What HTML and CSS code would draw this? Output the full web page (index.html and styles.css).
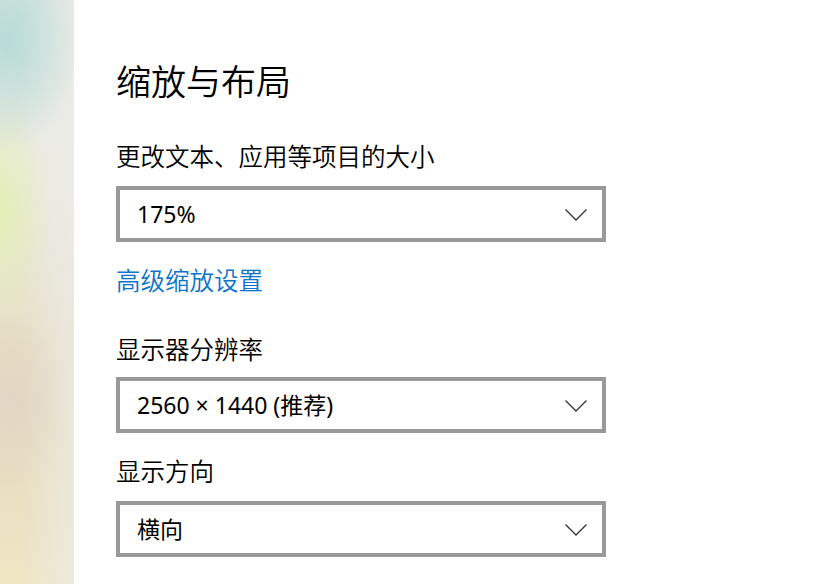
FILE: index.html
```html
<!DOCTYPE html>
<html lang="zh-CN">
<head>
<meta charset="utf-8">
<title>缩放与布局</title>
<link rel="stylesheet" href="styles.css">
</head>
<body>
<div class="page">
  <aside class="backdrop"></aside>
  <main class="content">
    <h1 class="title">缩放与布局</h1>
    <div class="label first">更改文本、应用等项目的大小</div>
    <div class="select">
      <span class="value">175%</span>
      <svg class="chev" width="24" height="13" viewBox="0 0 24 13"><path d="M1.5 1.5 L12 12 L22.5 1.5" fill="none" stroke="#333" stroke-width="1.3"/></svg>
    </div>
    <a class="link" href="#">高级缩放设置</a>
    <div class="label second">显示器分辨率</div>
    <div class="select">
      <span class="value">2560 × 1440 (推荐)</span>
      <svg class="chev" width="24" height="13" viewBox="0 0 24 13"><path d="M1.5 1.5 L12 12 L22.5 1.5" fill="none" stroke="#333" stroke-width="1.3"/></svg>
    </div>
    <div class="label third">显示方向</div>
    <div class="select">
      <span class="value">横向</span>
      <svg class="chev" width="24" height="13" viewBox="0 0 24 13"><path d="M1.5 1.5 L12 12 L22.5 1.5" fill="none" stroke="#333" stroke-width="1.3"/></svg>
    </div>
  </main>
</div>
</body>
</html>
```
FILE: styles.css
```css
html, body {
  margin: 0;
  padding: 0;
  height: 100%;
  background: #ffffff;
  overflow: hidden;
}
body {
  font-family: "Noto Sans", "Noto Sans CJK SC", sans-serif;
  color: #000;
}
.page {
  display: flex;
  height: 584px;
}
.backdrop {
  width: 74px;
  flex: none;
  background:
    radial-gradient(ellipse 70px 110px at 10px 40px, rgba(180, 218, 214, 0.95), rgba(180, 218, 214, 0) 100%),
    radial-gradient(ellipse 50px 120px at 0px 210px, rgba(226, 238, 180, 0.95), rgba(226, 238, 180, 0) 100%),
    radial-gradient(ellipse 60px 90px at 10px 400px, rgba(222, 212, 196, 0.8), rgba(222, 212, 196, 0) 100%),
    linear-gradient(to right, rgba(236, 236, 232, 0) 30%, rgba(236, 236, 232, 0.7) 100%),
    linear-gradient(to bottom, #e4e8e4 0%, #ecebe2 30%, #e8e4d4 45%, #e8dec4 60%, #e8dec2 80%, #efe6c4 100%);
}
.content {
  flex: 1;
  padding-left: 42px;
  display: flex;
  flex-direction: column;
  align-items: flex-start;
  font-weight: 350;
}
.title {
  margin: 60px 0 0;
  font-size: 35px;
  font-weight: 350;
  line-height: 44px;
  height: 44px;
}
.label {
  font-size: 24.5px;
  line-height: 34px;
  height: 34px;
}
.label.first { margin-top: 36px; }
.label.second { margin-top: 35px; }
.label.third { margin-top: 22px; }
.select {
  box-sizing: border-box;
  width: 490px;
  height: 56px;
  border: 4px solid #999999;
  background: #fff;
  margin-top: 12px;
  display: flex;
  align-items: center;
  justify-content: space-between;
  padding: 0 14px 0 17px;
}
.label.second + .select { margin-top: 10px; }
.value {
  font-size: 23px;
  line-height: 30px;
  font-weight: 400;
}
.chev { display: block; }
.link {
  margin-top: 22px;
  font-size: 24.5px;
  line-height: 34px;
  height: 34px;
  color: #0a73cc;
  text-decoration: none;
}
```
